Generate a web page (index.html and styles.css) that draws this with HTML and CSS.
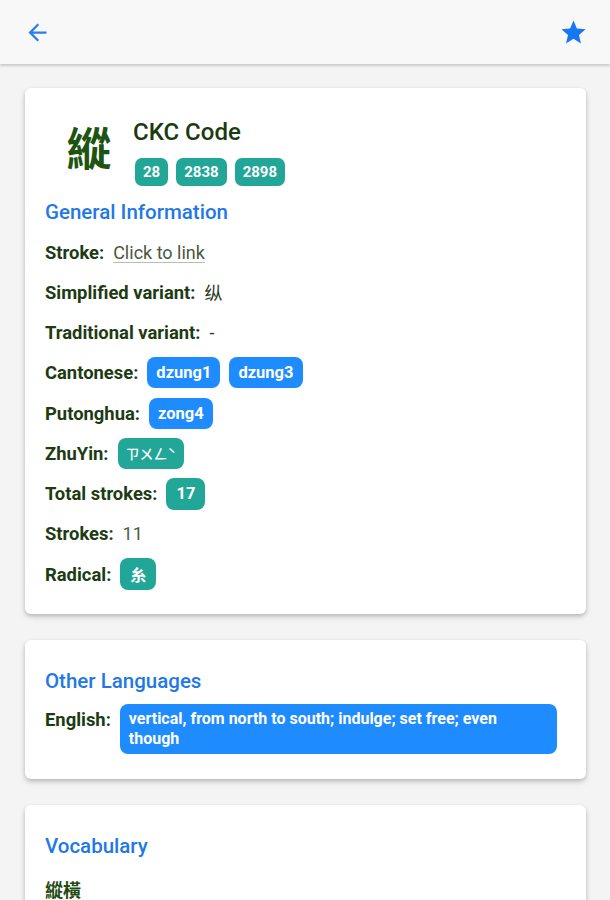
FILE: index.html
```html
<!DOCTYPE html>
<html lang="en">
<head>
<meta charset="utf-8">
<title>縱</title>
<link rel="stylesheet" href="styles.css">
</head>
<body>
<header class="topbar">
  <button class="icon-btn" aria-label="Back">
    <svg width="27" height="27" viewBox="0 0 24 24"><path d="M20 11H7.83l5.59-5.59L12 4l-8 8 8 8 1.41-1.41L7.83 13H20v-2z" fill="#2b7de9"/></svg>
  </button>
  <button class="icon-btn" aria-label="Favourite">
    <svg width="29" height="29" viewBox="0 0 24 24"><path d="M12 17.27L18.18 21l-1.64-7.03L22 9.24l-7.19-.61L12 2 9.19 8.63 2 9.24l5.46 4.73L5.82 21z" fill="#1677f2"/></svg>
  </button>
</header>
<main class="content">
  <section class="card">
    <div class="hero">
      <div class="hero-char">縱</div>
      <div class="hero-info">
        <div class="hero-title">CKC Code</div>
        <div class="chips">
          <span class="chip chip-teal chip-sm">28</span>
          <span class="chip chip-teal chip-sm">2838</span>
          <span class="chip chip-teal chip-sm">2898</span>
        </div>
      </div>
    </div>
    <h2 class="section-title">General Information</h2>
    <div class="row"><span class="label">Stroke:</span><span class="link">Click to link</span></div>
    <div class="row"><span class="label">Simplified variant:</span><span class="value value-dark">纵</span></div>
    <div class="row"><span class="label">Traditional variant:</span><span class="value value-dark">-</span></div>
    <div class="row"><span class="label">Cantonese:</span><span class="chip chip-blue">dzung1</span><span class="chip chip-blue">dzung3</span></div>
    <div class="row"><span class="label">Putonghua:</span><span class="chip chip-blue">zong4</span></div>
    <div class="row"><span class="label">ZhuYin:</span><span class="chip chip-teal chip-zy">ㄗㄨㄥˋ</span></div>
    <div class="row"><span class="label">Total strokes:</span><span class="chip chip-teal chip-sq">17</span></div>
    <div class="row"><span class="label">Strokes:</span><span class="value">11</span></div>
    <div class="row"><span class="label">Radical:</span><span class="chip chip-teal chip-sq chip-cjk">糸</span></div>
  </section>

  <section class="card card-pad">
    <h2 class="section-title">Other Languages</h2>
    <div class="lang-row">
      <span class="label">English:</span>
      <span class="chip chip-blue chip-block">vertical, from north to south; indulge; set free; even though</span>
    </div>
  </section>

  <section class="card card-pad">
    <h2 class="section-title">Vocabulary</h2>
    <div class="vocab">縱橫</div>
  </section>
</main>
</body>
</html>
```

FILE: styles.css
```css
* { box-sizing: border-box; }
html, body { margin: 0; padding: 0; }
body {
  background: #f4f4f4;
  font-family: Roboto, "Noto Sans", "Noto Sans CJK TC", sans-serif;
  color: #1d3b12;
  width: 610px;
  height: 900px;
  overflow: hidden;
}
.topbar {
  height: 64px;
  background: #f8f8f8;
  display: flex;
  align-items: center;
  justify-content: space-between;
  padding: 0 22px 0 24px;
  box-shadow: 0 2px 2px rgba(0,0,0,0.16);
  position: relative;
}
.icon-btn {
  background: none;
  border: 0;
  padding: 0;
  display: flex;
  align-items: center;
}
.content {
  padding: 24px 24px 0 25px;
  display: flex;
  flex-direction: column;
  gap: 26px;
}
.card {
  background: #fff;
  border-radius: 6px;
  box-shadow: 0 2px 4px rgba(0,0,0,0.22), 0 4px 8px rgba(0,0,0,0.06);
  padding: 31px 20px 20px 20px;
}
.card-pad { padding: 29px 20px 25px 20px; }
.hero { display: flex; align-items: flex-start; }
.hero-char {
  width: 88px;
  text-align: center;
  font-family: "Noto Sans CJK TC", sans-serif;
  font-size: 45px;
  font-weight: 700;
  line-height: 56px;
  color: #1c5410;
}
.hero-title {
  font-size: 24px;
  font-weight: 500;
  line-height: 26px;
  color: #1b3a0f;
}
.chips { display: flex; gap: 8px; margin-top: 13px; margin-left: 2px; }
.chip {
  display: inline-flex;
  align-items: center;
  justify-content: center;
  color: #fff;
  font-weight: 700;
  font-size: 16.5px;
  height: 31px;
  padding: 0 9px;
  border-radius: 8px;
  white-space: nowrap;
}
.chip + .chip { margin-left: 9px; }
.chips .chip + .chip { margin-left: 0; }
.chip-teal { background: #22a698; }
.chip-blue { background: #1e8bff; }
.chip-sm { height: 28px; font-size: 15px; padding: 0 8px; border-radius: 7px; }
.chip-sq { height: 32px; padding: 0 10px; }
.chip-cjk { font-family: "Noto Sans CJK TC", sans-serif; font-size: 16px; }
.chip-zy { font-family: "Noto Sans CJK TC", sans-serif; font-weight: 500; font-size: 14px; padding: 0 8px; }
.section-title {
  margin: 14px 0 8px;
  font-size: 20.5px;
  line-height: 24px;
  font-weight: 500;
  color: #1f78e8;
}
.card-pad .section-title { margin-top: 0; }
.row {
  height: 40.25px;
  display: flex;
  align-items: center;
}
.label {
  font-size: 18.4px;
  font-weight: 700;
  color: #1d3b12;
  margin-right: 9px;
  white-space: nowrap;
}
.link {
  font-size: 18px;
  color: #4a5840;
  text-decoration: underline;
  text-decoration-color: #b8beb4;
  text-underline-offset: 3px;
}
.value { font-size: 18px; color: #505a4c; }
.value-dark { color: #2a3a22; font-family: Roboto, "Noto Sans CJK TC", sans-serif; }
.lang-row {
  display: flex;
  align-items: flex-start;
  margin-top: 11px;
}
.lang-row .label { line-height: 32px; margin-right: 9px; }
.chip-block {
  flex: 1;
  height: auto;
  display: block;
  white-space: normal;
  font-size: 16px;
  line-height: 20px;
  padding: 5px 9px;
  margin-right: 9px;
}
.vocab {
  margin-top: 18px;
  font-family: "Noto Sans CJK TC", sans-serif;
  font-size: 18px;
  font-weight: 700;
  color: #1f4a12;
}
```
